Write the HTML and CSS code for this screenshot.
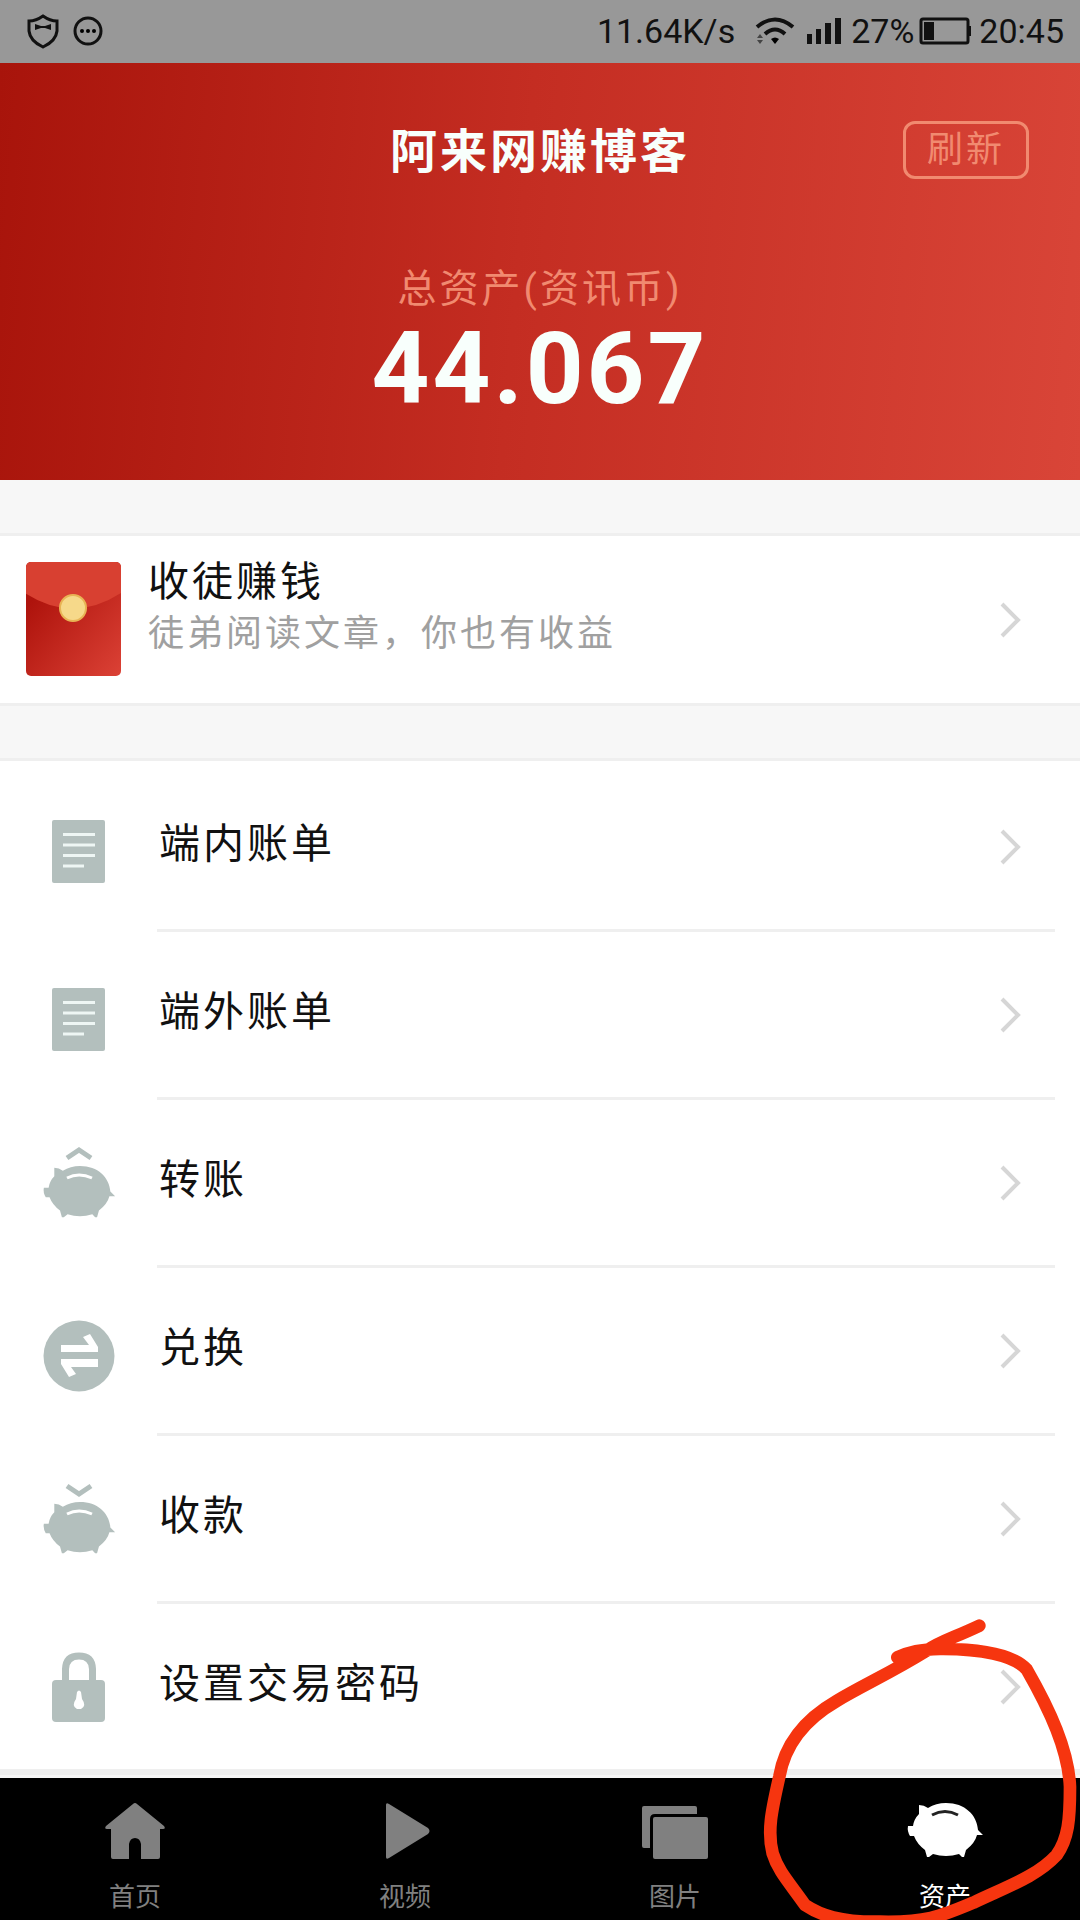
FILE: index.html
```html
<!DOCTYPE html>
<html lang="zh-CN">
<head>
<meta charset="utf-8">
<meta name="viewport" content="width=device-width, initial-scale=1">
<title>资产</title>
<link rel="stylesheet" href="styles.css">
</head>
<body>
<svg class="defs" aria-hidden="true">
  <symbol id="chevron" viewBox="0 0 24 40">
    <path d="M3 4 L19 20 L3 36" fill="none" stroke="currentColor" stroke-width="4"/>
  </symbol>
  <symbol id="bill" viewBox="0 0 80 80">
    <rect x="13" y="12" width="53" height="63" rx="2" fill="currentColor"/>
    <path d="M24 26.500H56M24 37H56M24 47.500H56M24 58H45" stroke="#eef6f4" stroke-width="3"/>
  </symbol>
  <symbol id="pig" viewBox="0 0 80 60">
    <path fill="currentColor" d="M14 4Q19 4 23 7Q31 2 41 2C60 2 72 14 73 29L78 34L72 34Q70 42 61 49L59 56H57L54 53Q41 57 28 53L24 56H22L20 49Q12 43 9 35L5 35Q2 30 3 25L8 25Q9 18 14 13Z"/>
  </symbol>
</svg>
<div class="screen">
  <div class="status">
    <div class="status-group">
      <svg class="shield" viewBox="0 0 34 36" aria-hidden="true">
        <path d="M17 3Q24 8 31 8V18Q30 28 17 34Q4 28 3 18V8Q10 8 17 3Z" fill="none" stroke="#111" stroke-width="3"/>
        <path d="M9 11L15 13H19L25 11V17L19 15H15L9 17Z" fill="#111"/>
      </svg>
      <svg class="dots" viewBox="0 0 32 32" aria-hidden="true">
        <circle cx="16" cy="16" r="13" fill="none" stroke="#111" stroke-width="3"/>
        <circle cx="10" cy="16" r="2"/><circle cx="16" cy="16" r="2"/><circle cx="22" cy="16" r="2"/>
      </svg>
    </div>
    <div class="status-group">
      <span class="speed">11.64K/s</span>
      <svg class="wifi" viewBox="0 0 40 28" aria-hidden="true">
        <path d="M2 10Q20 -5 38 10M10 17Q20 8 30 17" fill="none" stroke="#111" stroke-width="4"/>
        <path d="M16 22Q20 19 24 22L20 27Z"/><path d="M2 21L5 17L8 21ZM2 23H8L5 27Z" fill="#444"/>
      </svg>
      <svg class="signal" viewBox="0 0 34 28" aria-hidden="true">
        <path d="M0 17H5V27H0ZM9 12H14V27H9ZM18 6H24V27H18ZM28 1H34V27H28Z" fill="#111"/>
      </svg>
      <span class="percent">27%</span>
      <svg class="battery" viewBox="0 0 54 28" aria-hidden="true">
        <rect x="2" y="2" width="47" height="24" rx="2" fill="none" stroke="#111" stroke-width="3"/>
        <path d="M5 5H15V23H5ZM49 9H52V19H49Z" fill="#111"/>
      </svg>
      <span>20:45</span>
    </div>
  </div>

  <header class="summary">
    <div class="title-row">
      <h1 class="title">阿来网赚博客</h1>
      <button class="refresh" type="button">刷新</button>
    </div>
    <p class="total-label">总资产(资讯币)</p>
    <p class="total">44.067</p>
  </header>

  <main class="content">
    <a class="invite" href="#invite">
      <svg class="envelope" viewBox="0 0 96 116" aria-hidden="true">
        <defs>
          <linearGradient id="packet" x1="0" y1="0" x2="1" y2="1"><stop offset=".2" stop-color="#ae130c"/><stop offset="1" stop-color="#dc4236"/></linearGradient>
          <clipPath id="packet-shape"><rect x="1" y="0" width="95" height="114" rx="5"/></clipPath>
        </defs>
        <g clip-path="url(#packet-shape)">
          <rect width="96" height="116" fill="url(#packet)"/>
          <path d="M0 0H96V31Q48 62 0 31Z" fill="#d84031"/>
        </g>
        <circle cx="48" cy="46" r="13" fill="#f6d98a" stroke="#e8b455" stroke-width="2"/>
      </svg>
      <span class="invite-text">
        <span class="invite-title">收徒赚钱</span>
        <span class="invite-note">徒弟阅读文章，你也有收益</span>
      </span>
      <svg class="chevron"><use href="#chevron"/></svg>
    </a>

    <ul class="menu">
      <li><a class="item" href="#inner"><svg class="item-icon"><use href="#bill"/></svg><span class="item-body"><span class="item-label">端内账单</span><svg class="chevron"><use href="#chevron"/></svg></span></a></li>
      <li><a class="item" href="#outer"><svg class="item-icon"><use href="#bill"/></svg><span class="item-body"><span class="item-label">端外账单</span><svg class="chevron"><use href="#chevron"/></svg></span></a></li>
      <li><a class="item" href="#transfer"><svg class="item-icon" viewBox="0 0 80 80"><use href="#pig" x="2" y="20" width="76" height="57"/><path d="M28 14L40 6L52 14" fill="none" stroke="currentColor" stroke-width="5"/><path d="M28 34Q40 28 53 34" fill="none" stroke="#fff" stroke-width="3"/></svg><span class="item-body"><span class="item-label">转账</span><svg class="chevron"><use href="#chevron"/></svg></span></a></li>
      <li><a class="item" href="#exchange"><svg class="item-icon" viewBox="0 0 80 80"><circle cx="40" cy="44" r="35.500" fill="currentColor"/><path d="M22 33H50L44 25L51 22L59 35V40H22ZM59 55H32L37 62L30 65L22 52V47H59Z" fill="#fff"/></svg><span class="item-body"><span class="item-label">兑换</span><svg class="chevron"><use href="#chevron"/></svg></span></a></li>
      <li><a class="item" href="#collect"><svg class="item-icon" viewBox="0 0 80 80"><use href="#pig" x="2" y="20" width="76" height="57"/><path d="M28 6L40 14L52 6" fill="none" stroke="currentColor" stroke-width="5"/><path d="M28 34Q40 28 53 34" fill="none" stroke="#fff" stroke-width="3"/></svg><span class="item-body"><span class="item-label">收款</span><svg class="chevron"><use href="#chevron"/></svg></span></a></li>
      <li><a class="item" href="#password"><svg class="item-icon" viewBox="0 0 80 80"><rect x="13" y="33" width="53" height="42" rx="4" fill="currentColor"/><path d="M26.500 36V22Q27 9 40 9Q53 9 53.500 22V36" fill="none" stroke="currentColor" stroke-width="7"/><path d="M38 45Q40 42 42 45L43 52Q48 59 42 62H38Q32 59 37 52Z" fill="#fff"/></svg><span class="item-body"><span class="item-label">设置交易密码</span><svg class="chevron"><use href="#chevron"/></svg></span></a></li>
    </ul>
  </main>

  <nav class="tabs">
    <a class="tab" href="#home"><svg class="tab-icon" viewBox="0 0 80 60"><path fill="currentColor" d="M38 3Q40 1 42 3L69 25Q71 28 68 28H65V56Q65 58 63 58H46V43Q45 37 40 37Q35 37 34 43V58H18Q16 58 16 56V28H12Q9 28 11 25Z"/></svg><span>首页</span></a>
    <a class="tab" href="#video"><svg class="tab-icon" viewBox="0 0 80 60"><path fill="currentColor" d="M21 4Q21 1 24 3L63 27Q66 30 63 33L24 57Q21 59 21 56Z"/></svg><span>视频</span></a>
    <a class="tab" href="#photos"><svg class="tab-icon" viewBox="0 0 80 60"><path fill="currentColor" d="M9 5H60Q62 5 62 7V13H20Q15 13 15 18V47H9Q7 47 7 45V7Q7 5 9 5Z"/><rect x="18" y="16" width="55" height="42" rx="2" fill="currentColor"/></svg><span>图片</span></a>
    <a class="tab tab-active" href="#assets" aria-current="page"><svg class="tab-icon" viewBox="0 0 80 60"><use href="#pig"/><path d="M27 14Q40 7 53 14" fill="none" stroke="#222" stroke-width="3"/></svg><span>资产</span></a>
  </nav>

  <svg class="marker" viewBox="0 0 1020 960" aria-hidden="true">
    <path d="M718 77C640 114 600 124 560 152C450 220 370 255 290 303C200 355 135 430 118 530C98 620 80 690 98 760C115 815 150 850 195 915C240 945 300 967 420 965C560 968 600 950 700 908C800 860 890 830 950 765C985 715 990 660 990 560C985 450 930 330 860 208C820 165 720 146 600 147C540 148 510 155 472 172" fill="none" stroke="#f6350f" stroke-width="38" stroke-linecap="round" stroke-linejoin="round"/>
  </svg>
</div>
</body>
</html>
```
FILE: styles.css
```css
* {
  box-sizing: border-box;
}

body {
  margin: 0;
  background: #f7f7f7;
  color: #111;
  font-family: Roboto, "Noto Sans CJK SC", sans-serif;
}

a {
  color: inherit;
  text-decoration: none;
}

svg {
  display: block;
  flex: none;
}

.defs {
  position: absolute;
  width: 0;
  height: 0;
}

.screen {
  position: relative;
  display: flex;
  flex-direction: column;
  min-height: 100vh;
}

.status {
  display: flex;
  justify-content: space-between;
  height: 63px;
  padding: 0 16px 2px 26px;
  background: #989898;
  font-size: 34px;
  line-height: 60px;
}

.status-group {
  display: flex;
  align-items: center;
}

.shield {
  width: 34px;
  height: 36px;
  margin-right: 12px;
}

.dots {
  width: 32px;
  height: 32px;
}

.wifi {
  width: 40px;
  height: 28px;
  margin: 0 12px 0 20px;
}

.signal {
  width: 34px;
  height: 28px;
  margin-right: 10px;
}

.battery {
  width: 54px;
  height: 28px;
  margin: 0 6px 0 5px;
}

.summary {
  height: 417px;
  padding: 58px 51px 0;
  background: linear-gradient(95deg, #a8140b 0%, #c42d22 48%, #d94538 100%);
  color: #f8fffc;
  letter-spacing: 3px;
  text-align: center;
}

.title-row {
  display: grid;
  grid-template-columns: 1fr auto 1fr;
  align-items: center;
  height: 58px;
}

.title {
  grid-column: 2;
  margin: 0;
  padding-top: 4px;
  font-size: 47px;
  line-height: 54px;
  font-weight: 700;
}

.refresh {
  justify-self: end;
  width: 126px;
  height: 58px;
  padding: 0;
  border: 3px solid #f18a70;
  border-radius: 12px;
  background: transparent;
  color: #f18a70;
  font: inherit;
  font-size: 36px;
  line-height: 52px;
  letter-spacing: 3px;
}

.total-label {
  margin: 83px 0 0;
  color: #f18a70;
  font-size: 39px;
  line-height: 54px;
}

.total {
  margin: 0;
  font-size: 101px;
  line-height: 106px;
  font-weight: 700;
}

.content {
  flex: 1;
  padding-top: 53px;
}

.invite {
  display: flex;
  align-items: center;
  height: 173px;
  padding: 0 57px 0 25px;
  border: solid #efefef;
  border-width: 3px 0;
  background: #fff;
  letter-spacing: 3px;
}

.envelope {
  width: 96px;
  height: 116px;
  margin-right: 27px;
}

.invite-text {
  display: flex;
  flex: 1;
  flex-direction: column;
  padding-bottom: 24px;
}

.invite-title {
  font-size: 41px;
  line-height: 52px;
}

.invite-note {
  color: #a0a0a0;
  font-size: 36px;
  line-height: 52px;
}

.chevron {
  width: 24px;
  height: 40px;
  color: #d6d6d6;
}

.menu {
  margin: 52px 0 0;
  padding: 3px 0 0;
  border: solid #efefef;
  border-width: 3px 0 6px;
  background: #fff;
  list-style: none;
}

.item {
  display: flex;
  align-items: center;
  height: 168px;
  padding: 0 25px 0 39px;
  font-size: 41px;
  letter-spacing: 3px;
}

.item-icon {
  width: 80px;
  height: 80px;
  margin-right: 38px;
  color: #b3bfbd;
}

.item-body {
  display: flex;
  flex: 1;
  align-items: center;
  justify-content: space-between;
  height: 168px;
  padding-right: 32px;
  border-bottom: 3px solid #efefef;
}

li:last-child .item,
li:last-child .item-body {
  height: 165px;
  border-bottom: 0;
}

.item-label {
  padding: 0 0 14px 2px;
}

.tabs {
  display: grid;
  grid-template-columns: repeat(4, 1fr);
  height: 142px;
  background: #000;
  color: #808080;
  font-size: 26px;
  line-height: 36px;
}

.tab {
  display: flex;
  flex-direction: column;
  align-items: center;
  gap: 18px;
  padding-top: 23px;
}

.tab-active {
  color: #fff;
}

.tab-icon {
  width: 80px;
  height: 60px;
}

.marker {
  position: absolute;
  right: 0;
  bottom: 0;
  width: 340px;
  height: 320px;
  pointer-events: none;
}
```
